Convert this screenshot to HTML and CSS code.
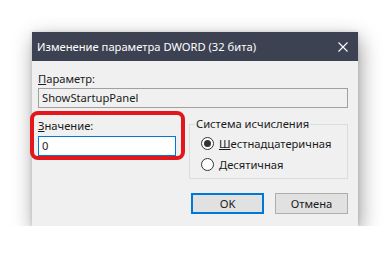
FILE: index.html
```html
<!DOCTYPE html>
<html lang="ru">
<head>
    <meta charset="UTF-8">
    <meta name="viewport" content="width=device-width, initial-scale=1.0">
    <title>Изменение параметра DWORD (32 бита)</title>
    <link rel="stylesheet" href="styles.css">
</head>
<body>
    <div class="dialog">
        <div class="titlebar">
            <span class="title">Изменение параметра DWORD (32 бита)</span>
            <svg class="close" width="10" height="10" viewBox="0 0 10 10">
                <path d="M0.5 0.5L9.5 9.5M9.5 0.5L0.5 9.5" stroke="#fff" stroke-width="1.1" fill="none"/>
            </svg>
        </div>
        <div class="content">
            <label class="field-label"><u>П</u>араметр:</label>
            <div class="edit readonly">ShowStartupPanel</div>
            <div class="row">
                <div class="value-col">
                    <label class="field-label"><u>З</u>начение:</label>
                    <div class="edit focused">0</div>
                    <div class="highlight"></div>
                </div>
                <fieldset class="group">
                    <legend>Система исчисления</legend>
                    <div class="radio"><span class="dot checked"></span><span><u>Ш</u>естнадцатеричная</span></div>
                    <div class="radio"><span class="dot"></span><span><u>Д</u>есятичная</span></div>
                </fieldset>
            </div>
            <div class="buttons">
                <button class="btn default">OK</button>
                <button class="btn">Отмена</button>
            </div>
        </div>
    </div>
</body>
</html>
```

FILE: styles.css
```css
body {
    margin: 0;
    background: #fff;
    font-family: "Noto Sans", Arial, sans-serif;
    font-size: 11.2px;
    color: #1a1a1a;
}
.dialog {
    margin: 32px 0 0 32px;
    width: 326px;
    height: 194px;
    background: #f0f0f0;
    box-shadow: 2px 7px 20px rgba(0, 0, 0, 0.4), 0 0 4px rgba(0, 0, 0, 0.12);
}
.titlebar {
    height: 29px;
    background: #3c4252;
    color: #fff;
    display: flex;
    align-items: center;
    justify-content: space-between;
    padding: 0 10px 0 5px;
}
.title {
    font-size: 11.2px;
}
.content {
    padding: 10px 10px 0 6px;
}
.field-label {
    display: block;
    line-height: 16px;
}
.edit {
    box-sizing: border-box;
    height: 20px;
    border: 1px solid #a0a0a0;
    padding: 0 3px;
    line-height: 18px;
    margin-top: 1px;
}
.readonly {
    background: #f0f0f0;
}
.focused {
    margin-top: 2px;
    background: #fff;
    border-color: #0078d7;
}
.row {
    display: flex;
    margin-top: 10px;
}
.value-col {
    position: relative;
    width: 138px;
}
.highlight {
    position: absolute;
    left: -8px;
    top: -7px;
    width: 155px;
    height: 49px;
    box-sizing: border-box;
    border: 4px solid #e3161b;
    border-radius: 8px;
}
.group {
    flex: 1;
    margin: 0 0 0 13px;
    padding: 3px 0 3px 5px;
    border: 1px solid #dcdcdc;
    min-width: 0;
}
.group legend {
    padding: 0 1px;
    line-height: 12px;
}
.radio {
    display: flex;
    align-items: center;
    height: 21px;
}
.dot {
    box-sizing: border-box;
    width: 13px;
    height: 13px;
    margin: 0 5px 0 6px;
    border: 1px solid #333;
    border-radius: 50%;
    background: #fff;
    position: relative;
}
.dot.checked::after {
    content: "";
    position: absolute;
    left: 2px;
    top: 2px;
    width: 7px;
    height: 7px;
    border-radius: 50%;
    background: #333;
}
.buttons {
    display: flex;
    justify-content: flex-end;
    gap: 11px;
    margin-top: 14px;
}
.btn {
    box-sizing: border-box;
    width: 73px;
    height: 21px;
    font-family: inherit;
    font-size: 11.2px;
    background: #e1e1e1;
    border: 1px solid #adadad;
    padding: 0;
    color: #1a1a1a;
}
.btn.default {
    border: 2px solid #0078d7;
}
```
